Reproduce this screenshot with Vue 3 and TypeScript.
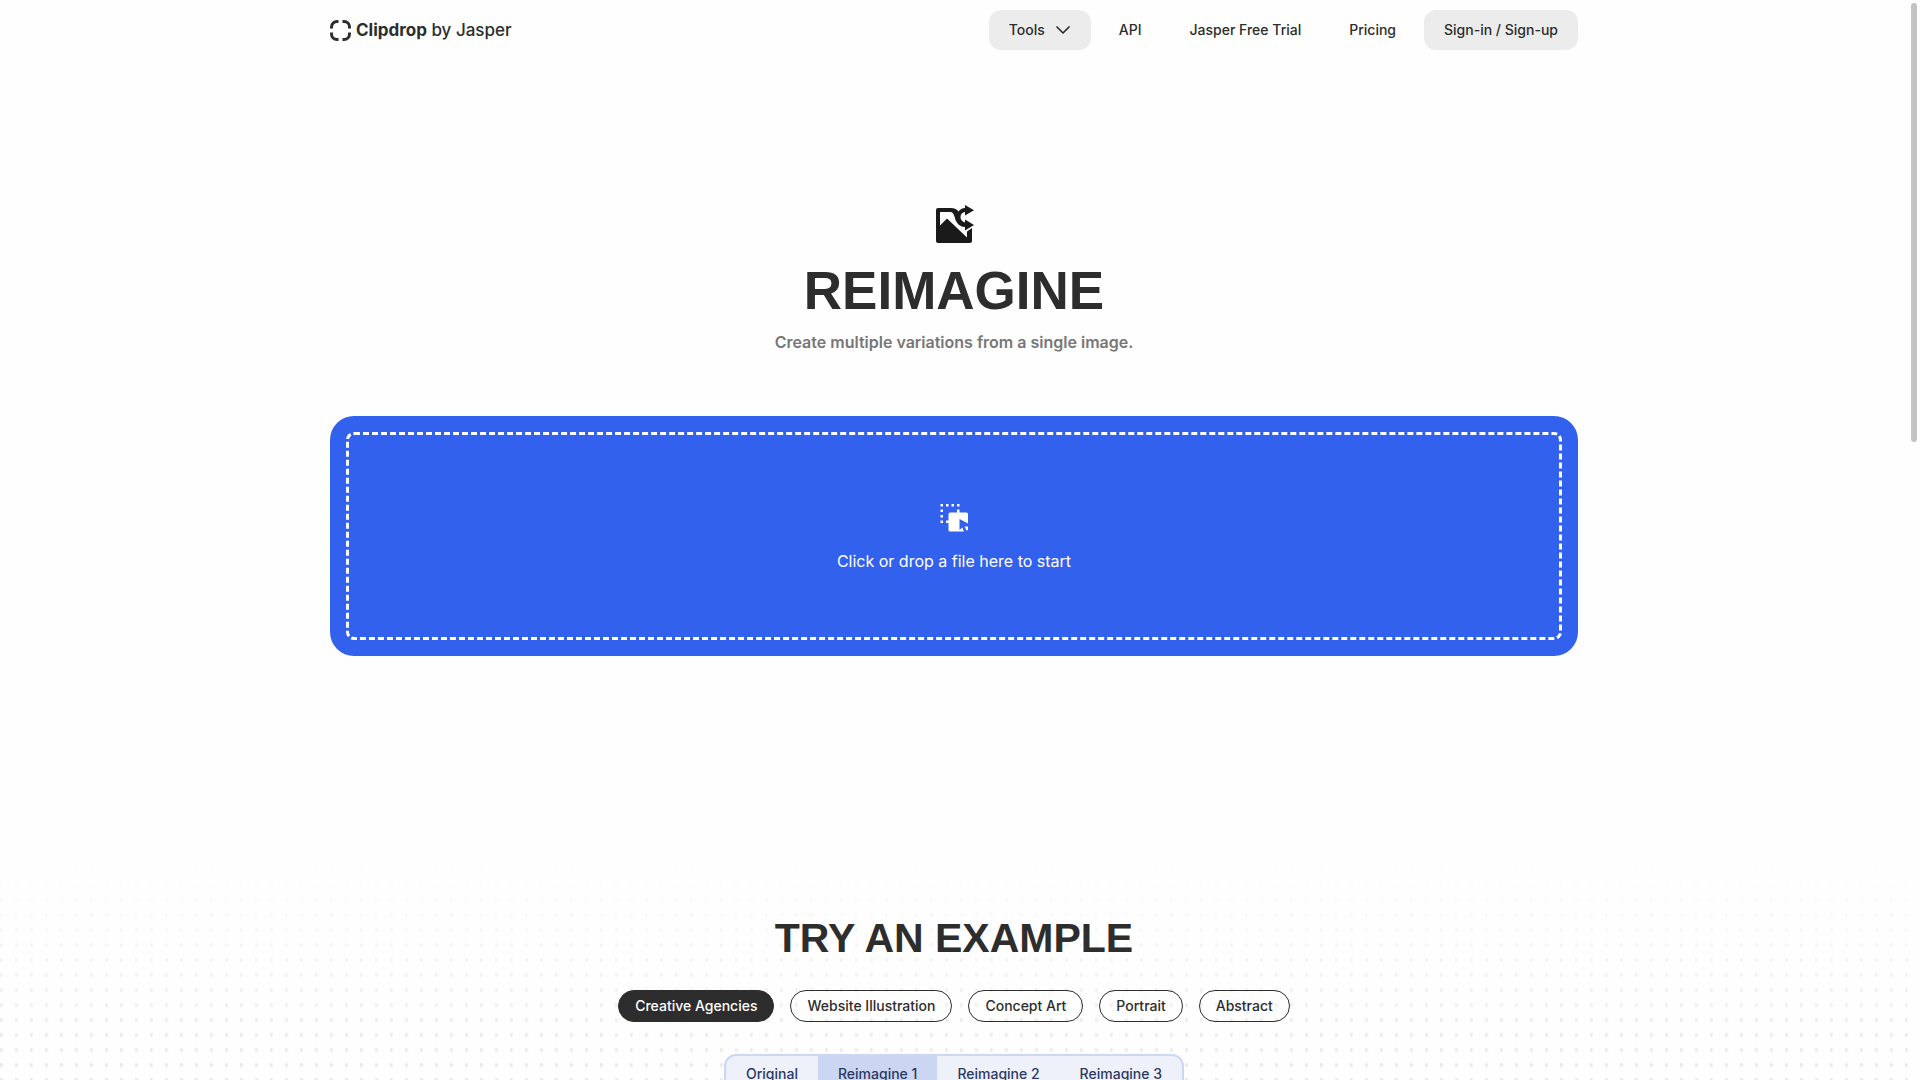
<script setup lang="ts">
import { ref } from 'vue'

const links: string[] = ['API', 'Jasper Free Trial', 'Pricing']
const categories: string[] = ['Creative Agencies', 'Website Illustration', 'Concept Art', 'Portrait', 'Abstract']
const results: string[] = ['Original', 'Reimagine 1', 'Reimagine 2', 'Reimagine 3']

const category = ref(0)
const result = ref(1)
</script>

<template>
  <div class="shell">
    <div class="page">
      <header class="header container">
        <a class="brand" href="#">
          <svg width="21" height="21" viewBox="0 0 21 21" fill="none" stroke="#2d2d2d" stroke-width="3" aria-hidden="true">
            <path d="M1.5 8.5V7A5.5 5.5 0 0 1 7 1.5H8.5M12.5 1.5H14A5.5 5.5 0 0 1 19.500 7V8.500M19.500 12.500V14A5.500 5.500 0 0 1 14 19.500H12.500M8.500 19.500H7A5.500 5.500 0 0 1 1.500 14V12.500" />
          </svg>
          <span><strong>Clipdrop</strong> by Jasper</span>
        </a>
        <nav class="nav">
          <button class="nav-item filled" type="button">
            Tools
            <svg width="16" height="16" viewBox="0 0 16 16" fill="none" stroke="#2d2d2d" stroke-width="1.7" stroke-linecap="round" stroke-linejoin="round" aria-hidden="true">
              <path d="M2 5L8 11L14 5" />
            </svg>
          </button>
          <a v-for="link in links" :key="link" class="nav-item" href="#">{{ link }}</a>
          <a class="nav-item filled" href="#">Sign-in / Sign-up</a>
        </nav>
      </header>

      <main>
        <section class="hero container">
          <svg class="hero-icon" width="40" height="40" viewBox="0 0 40 40" aria-hidden="true">
            <path fill="#1a1a1a" d="M4 4H17C20.500 4 23 5.200 24.500 7.500C26.300 5.200 28 4.200 31 4V1L40 6.300L31 11.500V8C28.500 8.300 26.500 10 26.500 13C26.500 15.800 28.500 18 31 18.500V15.500L40 21L31 26.500V23C25.500 22.700 22 19 20.800 13.500C19.800 10 18.800 8 16 8H6V21.500L13 14.500L33 33.500V27.500L38 24V37Q38 39 36 39H4Q2 39 2 37V6Q2 4 4 4Z" />
          </svg>
          <h1>REIMAGINE</h1>
          <p class="subtitle">Create multiple variations from a single image.</p>
          <button class="dropzone" type="button">
            <span class="dropzone-frame">
              <svg width="28" height="28" viewBox="0 0 28 28" fill="#fff" aria-hidden="true">
                <path d="M.5 0h2.500v2.500H.5zM6 0h2.500v2.500H6zM11.500 0h2.500v2.500h-2.500zM17 0h2.500v2.500H17zM.5 5.500h2.500V8H.5zM.5 11h2.500v2.500H.5zM.5 16.500h2.500V19H.5zM6 16.500h3V19H6zM17 5.500h2.500V9H17z" />
                <path d="M10 8.500H26.500Q28 8.500 28 10V19.500L19.500 15V26L22.200 23.500L24 27.500H10Q8.500 27.500 8.500 26V10Q8.500 8.500 10 8.500ZM24.500 22.500H28V26L26.500 26.500Z" />
              </svg>
              <span>Click or drop a file here to start</span>
            </span>
          </button>
        </section>

        <section class="examples">
          <h2>TRY AN EXAMPLE</h2>
          <div class="pills">
            <button
              v-for="(name, i) in categories"
              :key="name"
              class="pill"
              :class="{ active: i === category }"
              type="button"
              @click="category = i"
            >{{ name }}</button>
          </div>
          <div class="tabs" role="tablist">
            <button
              v-for="(name, i) in results"
              :key="name"
              class="tab"
              :class="{ active: i === result }"
              type="button"
              role="tab"
              :aria-selected="i === result"
              @click="result = i"
            >{{ name }}</button>
          </div>
        </section>
      </main>
    </div>
    <div class="scroll-thumb"></div>
  </div>
</template>

<style>
body {
  margin: 0;
  background: #fefefe;
}
</style>

<style scoped>
.shell {
  position: relative;
  height: 100vh;
  overflow: hidden;
  background: #fefefe;
  color: #2d2d2d;
  font-family: Inter, "Liberation Sans", sans-serif;
  font-size: 14px;
  line-height: 20px;
}

.page {
  margin-right: 12px;
}

.shell * {
  box-sizing: border-box;
}

button {
  margin: 0;
  padding: 0;
  border: 0;
  background: none;
  color: inherit;
  font: inherit;
  cursor: pointer;
}

a {
  color: inherit;
  text-decoration: none;
}

.container {
  width: 100%;
  max-width: 1248px;
  margin: 0 auto;
}

.header {
  display: flex;
  align-items: center;
  justify-content: space-between;
  height: 60px;
}

.brand {
  display: flex;
  align-items: center;
  gap: 5px;
  font-size: 17px;
  font-weight: 500;
}

.brand strong {
  font-weight: 700;
}

.nav {
  display: flex;
  gap: 8px;
}

.nav-item {
  display: flex;
  align-items: center;
  gap: 10px;
  height: 40px;
  padding: 0 20px;
  border-radius: 12px;
  font-weight: 500;
}

.filled {
  background: #ececec;
}

.hero {
  display: flex;
  flex-direction: column;
  align-items: center;
  padding: 144px 0 200px;
}

h1,
h2 {
  margin: 0;
  font-family: "Liberation Sans", Arial, sans-serif;
  font-weight: 700;
}

h1 {
  margin-top: 17px;
  font-size: 53px;
  line-height: 60px;
}

.subtitle {
  margin: 9px 0 62px;
  color: #777;
  font-size: 16px;
  font-weight: 600;
  line-height: 24px;
}

.dropzone {
  display: flex;
  width: 100%;
  min-height: 240px;
  padding: 16px;
  border-radius: 24px;
  background: #3261ed;
  color: #fff;
  font-size: 16px;
  line-height: 24px;
}

.dropzone-frame {
  display: flex;
  flex: 1;
  flex-direction: column;
  align-items: center;
  justify-content: center;
  gap: 17px;
  padding-top: 4px;
  border: 3px dashed #fff;
  border-radius: 8px;
}

.examples {
  display: flex;
  flex-direction: column;
  align-items: center;
  padding: 58px 0 80px;
  background:
    linear-gradient(#fefefe, rgba(254, 254, 254, 0) 260px),
    radial-gradient(circle at 1px 7px, #e4e4e4 1px, rgba(228, 228, 228, 0) 3px) 0 7px / 15px 15px;
}

h2 {
  font-size: 41px;
  line-height: 48px;
}

.pills {
  display: flex;
  gap: 16px;
  margin: 28px 0 32px;
}

.pill {
  height: 32px;
  padding: 0 16px;
  border: 1px solid #2d2d2d;
  border-radius: 16px;
  font-weight: 500;
}

.pill.active {
  background: #2d2d2d;
  color: #fff;
}

.tabs {
  display: flex;
  overflow: hidden;
  border: 2px solid #cbd7f3;
  border-radius: 12px;
  background: #eef0fa;
  color: #2c3963;
}

.tab {
  height: 36px;
  padding: 0 20px;
  font-weight: 500;
}

.tab.active {
  background: #cbd6f2;
}

.scroll-thumb {
  position: absolute;
  top: 3px;
  right: 3px;
  width: 6px;
  height: 439px;
  border-radius: 3px;
  background: #c3c3c3;
}
</style>
